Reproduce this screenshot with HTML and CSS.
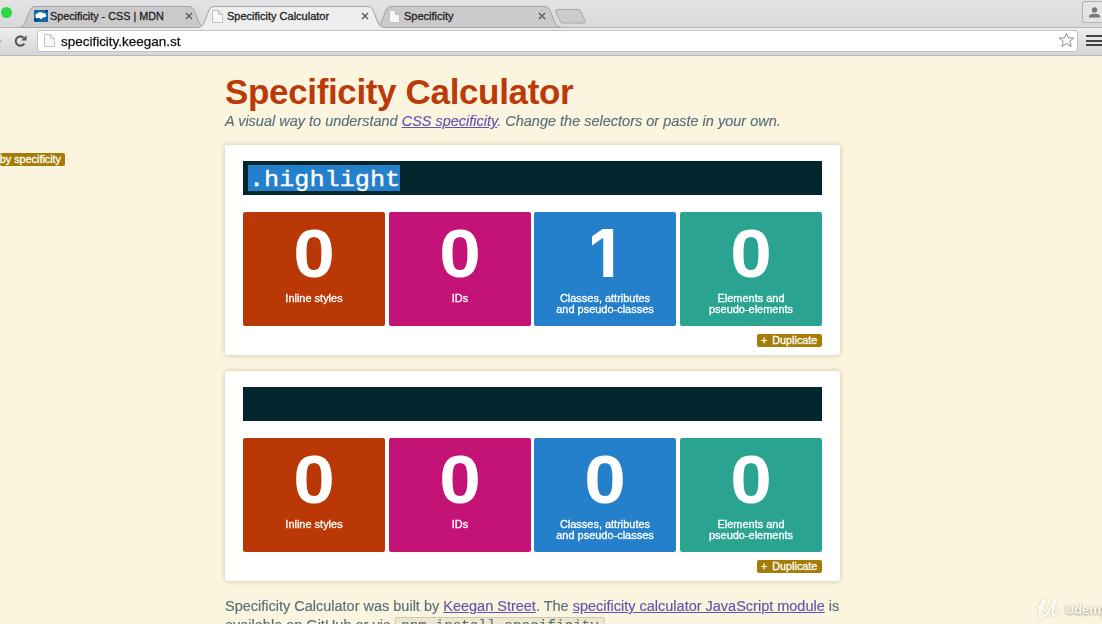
FILE: index.html
```html
<!DOCTYPE html>
<html lang="en">
<head>
<meta charset="utf-8">
<title>Specificity Calculator</title>
<link rel="stylesheet" href="styles.css">
</head>
<body>
<header class="browser">
  <div class="tabs">
    <span class="light"></span>
    <div class="tab tab-first">
      <svg class="tab-shape" width="186" height="22" viewBox="0 0 186 22"><path d="M0 21.5C4 21 5 19 6 17L11 4Q12.500 .5 16 .5H170Q173.500 .5 175 4L180 17Q182 21 186 21.500Z"/></svg>
      <svg class="icon" width="14" height="12" viewBox="0 0 14 12"><rect width="14" height="12" rx="1" fill="#1267a5"/><path d="M2 8Q0 4 4 3Q6 1 9 3Q13 3 12 7L9 7.500L7 9.500L6 8Z" fill="#fff"/><path d="M0 10H4M11 1H14" stroke="#0b3e73" stroke-width="2"/></svg>
      <span class="tab-title mdn">Specificity - CSS | MDN</span>
      <svg class="close" width="8" height="8" viewBox="0 0 8 8"><path d="M1 1L7 7M7 1L1 7"/></svg>
    </div>
    <div class="tab tab-active">
      <svg class="tab-shape" width="186" height="22" viewBox="0 0 186 22"><path d="M0 21.5C4 21 5 19 6 17L11 4Q12.500 .5 16 .5H170Q173.500 .5 175 4L180 17Q182 21 186 21.500V23H0Z"/></svg>
      <svg class="icon page" width="11" height="13" viewBox="0 0 11 13"><path d="M.5 .5H6.500L10.500 4.500V12.500H.5ZM6.500 .5V4.500H10.500"/></svg>
      <span class="tab-title">Specificity Calculator</span>
      <svg class="close" width="8" height="8" viewBox="0 0 8 8"><path d="M1 1L7 7M7 1L1 7"/></svg>
    </div>
    <div class="tab tab-last">
      <svg class="tab-shape" width="186" height="22" viewBox="0 0 186 22"><path d="M0 21.5C4 21 5 19 6 17L11 4Q12.500 .5 16 .5H170Q173.500 .5 175 4L180 17Q182 21 186 21.500Z"/></svg>
      <svg class="icon page" width="11" height="13" viewBox="0 0 11 13"><path d="M.5 .5H6.500L10.500 4.500V12.500H.5ZM6.500 .5V4.500H10.500"/></svg>
      <span class="tab-title">Specificity</span>
      <svg class="close" width="8" height="8" viewBox="0 0 8 8"><path d="M1 1L7 7M7 1L1 7"/></svg>
    </div>
    <svg class="new-tab" width="31" height="15" viewBox="0 0 31 15"><path d="M3 .5H23Q25 .5 26 2.500L30 11.500Q31 14 28.500 14H8Q6 14 5 12L.8 3Q0 .5 3 .5Z"/></svg>
    <span class="user"><svg width="11" height="11" viewBox="0 0 11 11"><circle cx="5.500" cy="3" r="2.700"/><path d="M0 10.500V9Q1 6.800 5.500 6.800T11 9V10.500Z"/></svg></span>
  </div>
  <div class="toolbar">
    <svg class="forward" width="3" height="6" viewBox="0 0 3 6"><path d="M0 0L3 3L0 6Z" fill="#bbb"/></svg>
    <svg class="reload" width="13" height="12" viewBox="0 0 13 12"><path d="M10.300 8.500A4.600 4.600 0 1 1 9.500 2.700" fill="none" stroke="#555" stroke-width="2"/><path d="M12.500 .2V5.500H7.200Z" fill="#555"/></svg>
    <div class="omnibox">
      <svg class="page" width="11" height="13" viewBox="0 0 11 13"><path d="M.5 .5H6.500L10.500 4.500V12.500H.5ZM6.500 .5V4.500H10.500"/></svg>
      <span class="url">specificity.keegan.st</span>
      <svg class="star" width="17" height="16" viewBox="0 0 17 16"><path d="M8.500 1.200L10.600 6H15.800L11.700 9.300L13.200 14.500L8.500 11.500L3.800 14.500L5.300 9.300L1.200 6H6.400Z"/></svg>
    </div>
    <span class="menu"></span>
  </div>
</header>

<span class="button sort">by specificity</span>

<main class="page-body">
  <h1>Specificity Calculator</h1>
  <p class="intro">A visual way to understand <a>CSS specificity</a>. Change the selectors or paste in your own.</p>

  <section class="card">
    <div class="selector"><div class="selected"><span>.highlight</span></div></div>
    <div class="scores">
      <div class="score inline"><b>0</b><span>Inline styles</span></div>
      <div class="score ids"><b>0</b><span>IDs</span></div>
      <div class="score classes"><b class="one">1</b><span>Classes, attributes<br>and pseudo-classes</span></div>
      <div class="score elements"><b>0</b><span>Elements and<br>pseudo-elements</span></div>
    </div>
    <span class="button duplicate"><i>+</i>Duplicate</span>
  </section>

  <section class="card">
    <div class="selector"></div>
    <div class="scores">
      <div class="score inline"><b>0</b><span>Inline styles</span></div>
      <div class="score ids"><b>0</b><span>IDs</span></div>
      <div class="score classes"><b>0</b><span>Classes, attributes<br>and pseudo-classes</span></div>
      <div class="score elements"><b>0</b><span>Elements and<br>pseudo-elements</span></div>
    </div>
    <span class="button duplicate"><i>+</i>Duplicate</span>
  </section>

  <p class="credits">Specificity Calculator was built by <a>Keegan Street</a>. The <a>specificity calculator JavaScript module</a> is<br>available on GitHub or via <code>npm install specificity</code></p>
</main>

<div class="watermark">
  <svg width="26" height="22" viewBox="0 0 26 22"><path d="M2 11Q7 8 8 2Q11 0 10 4Q5 17 9 18Q14 17 18 4Q20 0 21 3Q15 18 19 17Q22 16 24 13M8 3Q2 19 7 20Q12 19 18 5"/></svg>
  <span>Udemy</span>
</div>
</body>
</html>
```

FILE: styles.css
```css
* { box-sizing: border-box; }

body {
  margin: 0;
  width: 1102px;
  height: 624px;
  overflow: hidden;
  position: relative;
  background: #fbf4df;
  color: #58707a;
  font-family: "Liberation Sans", Arial, sans-serif;
}

svg { display: block; flex: none; }

/* Browser window */
.browser { height: 56px; }

.tabs {
  height: 27px;
  display: flex;
  align-items: flex-start;
  background: linear-gradient(#e4e2e4, #d9d8da);
}

.light {
  flex: none;
  width: 11px;
  height: 11px;
  margin: 7px 7px 0 1px;
  border-radius: 50%;
  background: #2bd840;
}

.tab {
  position: relative;
  z-index: 0;
  flex: none;
  width: 186px;
  height: 22px;
  margin-top: 6px;
  margin-right: -7px;
  padding: 0 12px 0 15px;
  display: flex;
  align-items: center;
  color: #222;
}

.tab-first { margin-right: -7px; }
.tab-active { z-index: 1; margin-right: -9px; padding-right: 15px; }
.tab-last { margin-right: -6px; padding-right: 15px; }

.tab-shape { position: absolute; left: 0; top: 0; z-index: -1; }
.tab-shape path { fill: #cbc9cb; stroke: #a6a4a6; }
.tab-active .tab-shape path { fill: #eeedef; }

.icon { margin-top: -2px; }
.tab-active .icon { margin-left: -1px; }
.tab-last .icon { margin-left: -1px; }

.tab-title {
  margin: -2px auto 0 4px;
  font-size: 11px;
  white-space: nowrap;
  -webkit-text-stroke: .3px #222;
}

.mdn { margin-left: 2px; font-size: 10.800px; }

.close { margin-top: -2px; }
.close path { stroke: #555; stroke-width: 1.2; fill: none; }

.page path { fill: #f8f8f8; stroke: #c2c2c2; }

.new-tab { margin-top: 9px; }
.new-tab path { fill: #cdcbcd; stroke: #aaa8aa; }

.user {
  width: 20px;
  height: 22px;
  margin: 1px 0 0 auto;
  padding: 5px 0 0 6px;
  border: 1px solid #b3b2b4;
  border-right: 0;
  border-radius: 3px 0 0 3px;
  background: #e5e4e6;
  overflow: hidden;
}

.user svg { fill: #777; }

.toolbar {
  height: 29px;
  display: flex;
  align-items: flex-start;
  background: linear-gradient(#eeedef, #d7d6d9 24px);
  border-top: 1px solid #b4b3b5;
  border-bottom: 1px solid #b9b7ba;
}

.forward { margin: 10px 11px 0 -1px; }
.reload { margin: 7px 10px 0 1px; }

.omnibox {
  width: 1042px;
  height: 22px;
  margin-top: 2px;
  padding: 0 2px 0 6px;
  display: flex;
  align-items: center;
  border: 1px solid #c3c2c4;
  border-radius: 3px;
  background: #fff;
}

.omnibox .page { margin-top: -2px; }

.url {
  margin: 0 auto 0 6px;
  font-size: 13px;
  color: #111;
  transform: scaleX(1.035);
  transform-origin: left;
  -webkit-text-stroke: .25px #111;
}

.star { margin-top: -2px; }
.star path { fill: #fff; stroke: #8d8d8d; }

.menu {
  width: 16px;
  height: 11px;
  margin: 7px 0 0 8px;
  border-top: 2px solid #444;
  border-bottom: 2px solid #444;
  background: linear-gradient(#444, #444) center / 100% 2px no-repeat;
}

/* Page */
.button {
  display: flex;
  align-items: center;
  height: 13px;
  border-radius: 2px;
  background: #a57c08;
  color: #fff;
  font-size: 10.800px;
  line-height: 13px;
  -webkit-text-stroke: .3px #fff;
  white-space: nowrap;
}

.sort { position: absolute; left: 0; top: 153px; width: 65px; padding-right: 4px; justify-content: flex-end; }

.page-body { width: 615px; margin-left: 225px; padding-top: 15px; }

h1 {
  margin: 0;
  height: 42px;
  line-height: 41px;
  font-size: 35px;
  letter-spacing: -.35px;
  color: #bb3a0a;
  white-space: nowrap;
}

p {
  margin: 0;
  font-size: 14px;
  white-space: nowrap;
  transform: scaleX(1.035);
  transform-origin: left;
  -webkit-text-stroke: .15px;
}

.intro { height: 32px; line-height: 17px; font-style: italic; }

a { color: #6354b0; text-decoration: underline; }

.card {
  height: 210px;
  margin-bottom: 16px;
  padding: 16px 18px 0;
  border-radius: 3px;
  background: #fff;
  box-shadow: 0 0 5px rgba(120, 105, 60, .35);
}

.selector {
  height: 34px;
  padding: 4px 5px;
  background: #04272f;
}

.selected {
  width: 152px;
  height: 26px;
  padding-left: 1px;
  background: #2580cb;
  color: #fff;
  font: 25.200px/27px "Liberation Mono", monospace;
  -webkit-text-stroke: .35px #fff;
}

.selected span { display: block; transform: translateY(1px) scaleY(.87); transform-origin: 0 21px; }

.scores {
  display: grid;
  grid-template-columns: repeat(4, 1fr);
  column-gap: 3.700px;
  margin-top: 16.500px;
}

.score {
  height: 114px;
  padding-top: 5px;
  border-radius: 2px;
  color: #fff;
  text-align: center;
}

.score b { display: block; font-size: 68px; line-height: 70px; transform: translateY(.5px) scaleX(1.1); }
.score .one { font-family: Inter, sans-serif; font-size: 66px; transform: translate(-2px, 1px); }

.score span {
  display: block;
  margin-top: 6px;
  font-size: 10.800px;
  line-height: 11.500px;
  transform: scaleX(1.015);
  -webkit-text-stroke: .3px #fff;
}

.inline { background: #ba3706; }
.ids { background: #c41376; }
.classes { background: #2580cb; }
.elements { background: #2aa390; }

.duplicate { width: 65px; margin: 8.500px 0 0 auto; padding-left: 4px; }
.duplicate i { margin-right: 5px; font-style: normal; }

.credits { line-height: 19px; }

code {
  padding: 0 5px;
  border: 1px solid #cfc8b4;
  border-radius: 2px;
  background: #eee6cf;
  font: 13.850px/15px "Liberation Mono", monospace;
}

.watermark {
  position: absolute;
  left: 1035px;
  top: 598px;
  display: flex;
  align-items: center;
  gap: 4px;
  color: #fffdf5;
  font: 600 12.500px "Open Sans", sans-serif;
  text-shadow: 0 1px 2px #b5ae9c;
  filter: drop-shadow(0 0 1px #c8c1ad);
}

.watermark path { fill: none; stroke: #fffdf5; stroke-width: 2; stroke-linecap: round; }
```
